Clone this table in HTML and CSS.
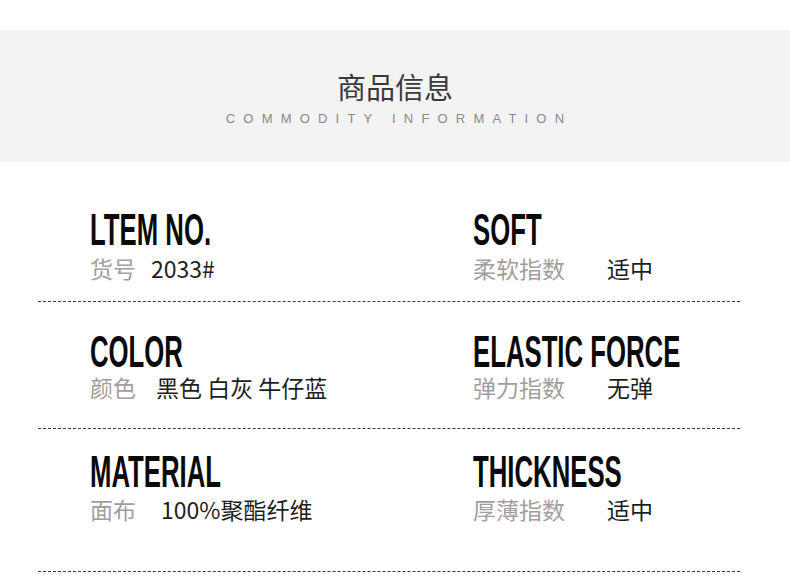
FILE: index.html
```html
<!DOCTYPE html>
<html lang="zh">
<head>
<meta charset="utf-8">
<title>商品信息</title>
<link rel="stylesheet" href="styles.css">
</head>
<body>
<div class="page">
  <header class="band">
    <h1 class="band-title">商品信息</h1>
    <p class="band-sub">COMMODITY INFORMATION</p>
  </header>
  <section class="specs">
    <div class="row row-1">
      <div class="cell cell-left">
        <h2 class="head"><span class="head-text">LTEM NO.</span></h2>
        <p class="line"><span class="label">货号</span><span class="value gap-s">2033#</span></p>
      </div>
      <div class="cell">
        <h2 class="head"><span class="head-text">SOFT</span></h2>
        <p class="line"><span class="label">柔软指数</span><span class="value gap-xl">适中</span></p>
      </div>
    </div>
    <div class="row row-2">
      <div class="cell cell-left">
        <h2 class="head"><span class="head-text">COLOR</span></h2>
        <p class="line"><span class="label">颜色</span><span class="value gap-m">黑色 白灰 牛仔蓝</span></p>
      </div>
      <div class="cell">
        <h2 class="head"><span class="head-text">ELASTIC FORCE</span></h2>
        <p class="line"><span class="label">弹力指数</span><span class="value gap-xl">无弹</span></p>
      </div>
    </div>
    <div class="row row-3">
      <div class="cell cell-left">
        <h2 class="head"><span class="head-text">MATERIAL</span></h2>
        <p class="line"><span class="label">面布</span><span class="value gap-l">100%聚酯纤维</span></p>
      </div>
      <div class="cell">
        <h2 class="head"><span class="head-text">THICKNESS</span></h2>
        <p class="line"><span class="label">厚薄指数</span><span class="value gap-xl">适中</span></p>
      </div>
    </div>
  </section>
</div>
</body>
</html>
```
FILE: styles.css
```css
* { box-sizing: border-box; }
html, body { margin: 0; padding: 0; background: #fff; }
body {
  width: 790px;
  height: 578px;
  overflow: hidden;
  font-family: "Noto Sans CJK SC", "Noto Sans", sans-serif;
}
.band {
  margin-top: 30px;
  height: 132px;
  background: #f3f3f3;
  display: flex;
  flex-direction: column;
  align-items: center;
  padding-top: 39px;
}
.band-title {
  margin: 0;
  font-size: 29px;
  line-height: 34px;
  font-weight: 400;
  color: #3a3a3a;
}
.band-sub {
  margin: 8px 0 0;
  font-family: "Liberation Sans", Arial, sans-serif;
  font-size: 13px;
  line-height: 16px;
  letter-spacing: 8.2px;
  color: #8a8a8a;
  padding-left: 8px;
}
.row {
  display: grid;
  grid-template-columns: 435px 1fr;
  margin: 0 50px 0 38px;
  border-bottom: 1px dashed #3a3a3a;
}
.row-1 { height: 140px; padding-top: 46px; }
.row-2 { height: 127px; padding-top: 28px; }
.row-3 { height: 143px; padding-top: 21px; }
.cell-left { padding-left: 52px; }
.head {
  margin: 0;
  height: 44px;
  font-family: "Liberation Sans Narrow", "Liberation Sans", Arial, sans-serif;
  font-weight: 700;
  font-size: 44px;
  line-height: 44px;
  color: #0a0a0a;
  white-space: nowrap;
}
.head-text {
  display: inline-block;
  transform: scaleX(0.585);
  transform-origin: 0 50%;
}
.line {
  margin: 2px 0 0;
  font-size: 23px;
  line-height: 26px;
  white-space: nowrap;
}
.row-1 .line { margin-top: 3px; }
.row-2 .line { margin-top: 0; }
.label { color: #a59d9d; }
.value { color: #1e1e1e; }
.gap-s { margin-left: 15px; }
.gap-m { margin-left: 20px; }
.gap-l { margin-left: 25px; }
.gap-xl { margin-left: 42px; }
```
